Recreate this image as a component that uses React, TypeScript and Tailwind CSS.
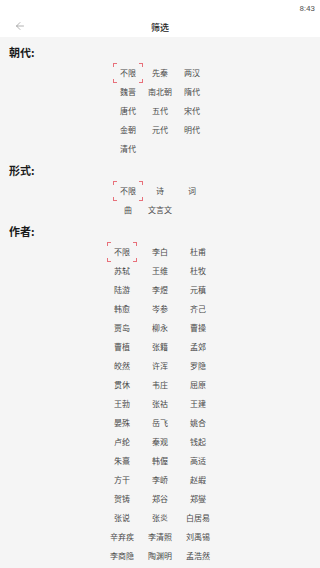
import { ArrowLeft } from "lucide-react";

const dynasties = ["不限", "先秦", "两汉", "魏晋", "南北朝", "隋代", "唐代", "五代", "宋代", "金朝", "元代", "明代", "清代"];
const forms = ["不限", "诗", "词", "曲", "文言文"];
const authors = [
  "不限", "李白", "杜甫",
  "苏轼", "王维", "杜牧",
  "陆游", "李煜", "元稹",
  "韩愈", "岑参", "齐己",
  "贾岛", "柳永", "曹操",
  "曹植", "张籍", "孟郊",
  "皎然", "许浑", "罗隐",
  "贯休", "韦庄", "屈原",
  "王勃", "张祜", "王建",
  "晏殊", "岳飞", "姚合",
  "卢纶", "秦观", "钱起",
  "朱熹", "韩偓", "高适",
  "方干", "李峤", "赵嘏",
  "贺铸", "郑谷", "郑燮",
  "张说", "张炎", "白居易",
  "辛弃疾", "李清照", "刘禹锡",
  "李商隐", "陶渊明", "孟浩然",
];

function Item({ name, active }: { name: string; active?: boolean }) {
  return (
    <div className="relative flex h-[19px] items-center justify-center">
      {active && (
        <div className="absolute left-1/2 top-1/2 h-[20px] w-[30px] -translate-x-1/2 -translate-y-1/2">
          <span className="absolute left-0 top-0 h-[4px] w-[4px] border-l-[1.5px] border-t-[1.5px] border-[#e8707a]" />
          <span className="absolute right-0 top-0 h-[4px] w-[4px] border-r-[1.5px] border-t-[1.5px] border-[#e8707a]" />
          <span className="absolute bottom-0 left-0 h-[4px] w-[4px] border-b-[1.5px] border-l-[1.5px] border-[#e8707a]" />
          <span className="absolute bottom-0 right-0 h-[4px] w-[4px] border-b-[1.5px] border-r-[1.5px] border-[#e8707a]" />
        </div>
      )}
      <span className="relative whitespace-nowrap text-[8px] leading-none text-[#4a4a4a]">{name}</span>
    </div>
  );
}

function Section({ title, items, colClass }: { title: string; items: string[]; colClass: string }) {
  return (
    <div className="mb-[5px]">
      <div className="h-[14px] pl-[9px] text-[11px] font-bold leading-[14px] text-[#1a1a1a]">{title}</div>
      <div className={`mx-auto mt-[4px] grid grid-cols-3 ${colClass}`}>
        {items.map((n, i) => (
          <Item key={i} name={n} active={i === 0} />
        ))}
      </div>
    </div>
  );
}

export default function App() {
  return (
    <div
      className="h-[568px] w-[320px] overflow-hidden bg-[#f5f5f5]"
      style={{ fontFamily: '"Noto Sans CJK SC", "Noto Sans", sans-serif' }}
    >
      <div className="bg-white">
        <div className="flex h-[18px] items-center justify-end pr-[5px]">
          <span className="text-[8px] text-[#555]" style={{ fontFamily: "Roboto, sans-serif" }}>8:43</span>
        </div>
        <div className="relative flex h-[19px] items-center justify-center">
          <ArrowLeft className="absolute left-[14px] top-[2px]" size={12} strokeWidth={1.3} color="#8a8a8a" />
          <span className="text-[9px] font-medium text-[#222]">筛选</span>
        </div>
      </div>

      <div className="pt-[8px]">
        <Section title="朝代:" items={dynasties} colClass="w-[96px]" />
        <Section title="形式:" items={forms} colClass="w-[96px]" />
        <Section title="作者:" items={authors} colClass="w-[114px]" />
      </div>
    </div>
  );
}
